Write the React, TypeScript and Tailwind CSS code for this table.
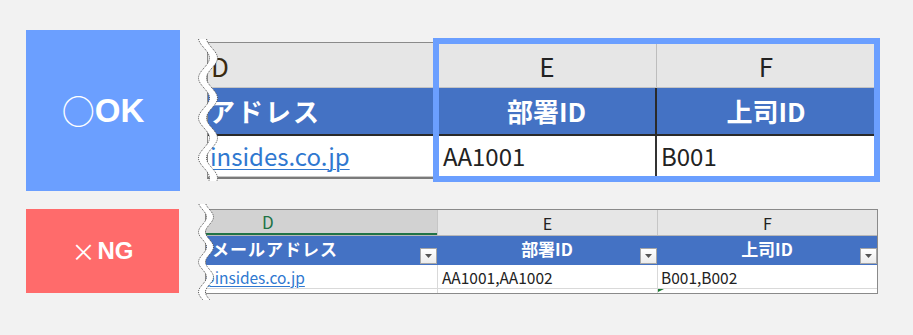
import React from 'react';

const jp = "font-['Noto_Sans_CJK_JP','Noto_Sans',sans-serif]";
const label = "font-['Liberation_Sans','Noto_Sans_CJK_JP',sans-serif]";

// sine band used to mark where a sheet is cut off
const wave = (c: number, amp: number, len: number, h: number, offset: number) => {
  const pts: [number, number][] = [];
  for (let y = 0; y <= h; y += 1) {
    pts.push([c - amp * Math.cos(((y - offset) / len) * Math.PI * 2), y]);
  }
  return pts;
};

const BreakLine = ({ c, amp, len, h, offset, half }: { c: number; amp: number; len: number; h: number; offset: number; half: number }) => {
  const pts = wave(c, amp, len, h, offset);
  const left = pts.map(([x, y]) => `${(x - half).toFixed(2)},${y}`);
  const right = pts.map(([x, y]) => `${(x + half).toFixed(2)},${y}`);
  const band = [...left, ...right.slice().reverse()].join(' ');
  return (
    <svg width={c * 2} height={h} className="block">
      <polygon points={band} fill="#ffffff" />
      <polyline points={left.join(' ')} fill="none" stroke="#555" strokeWidth="1" strokeDasharray="1 1" />
      <polyline points={right.join(' ')} fill="none" stroke="#555" strokeWidth="1" strokeDasharray="1 1" />
    </svg>
  );
};

const Dropdown = () => (
  <div className="absolute right-0 bottom-[1px] w-[17px] h-[16px] border border-[#a6a6a6] bg-gradient-to-b from-white to-[#ececec] flex items-center justify-center">
    <svg width="7" height="4" viewBox="0 0 7 4">
      <polygon points="0,0 7,0 3.5,4" fill="#555" />
    </svg>
  </div>
);

const GoodTable = () => (
  <div className="relative mt-[12px] ml-[27px] w-[669px]">
    <div className={`border border-[#8a8a8a] border-b-[2px] border-b-[#7a7a7a] ${jp}`}>
      <div className="flex h-[45px] bg-[#e6e6e6] border-b border-[#c4c4c4] text-[26px] text-[#222]">
        <div className="w-[230px] pl-[3px] leading-[45px] text-[#3a2a10]">D</div>
        <div className="w-[219px] text-center leading-[45px] border-r border-[#bdbdbd]">E</div>
        <div className="flex-1 text-center leading-[45px]">F</div>
      </div>
      <div className="flex h-[48px] bg-[#4472c4] border-b-[2px] border-[#2a2a2a] text-white font-bold text-[26px]">
        <div className="w-[230px] pl-[1px] leading-[46px] tracking-[2px]">アドレス</div>
        <div className="w-[219px] text-center leading-[46px] border-r-[2px] border-[#2a2a2a]">部署ID</div>
        <div className="flex-1 text-center leading-[46px]">上司ID</div>
      </div>
      <div className="flex h-[41px] bg-white text-[24px] text-[#222] border-b border-[#c8c8c8]">
        <div className="w-[230px] pl-[2px] leading-[40px] text-[#2f78d0] underline underline-offset-[3px] decoration-1">insides.co.jp</div>
        <div className="w-[219px] pl-[5px] leading-[40px] border-r-[2px] border-[#333]">AA1001</div>
        <div className="flex-1 pl-[4px] leading-[40px]">B001</div>
      </div>
    </div>
    <div className="absolute left-[-12px] top-[-3px]">
      <BreakLine c={13} amp={5.5} len={40} h={142} offset={-1} half={4} />
    </div>
    <div className="absolute left-[226px] top-[-4px] w-[447px] h-[144px] border-[6px] border-[#6b9fff]" />
  </div>
);

const BadTable = () => (
  <div className="relative ml-[26px] w-[673px]">
    <div className={`border border-[#8a8a8a] ${jp}`}>
      <div className="flex h-[26px] text-[16px] text-[#222] border-b border-[#b8b8b8]">
        <div className="w-[231px] bg-[#d2d2d2] border-b-[2px] border-[#217346] pl-[56px] leading-[24px] text-[#217346] text-[17px]">D</div>
        <div className="w-[220px] bg-[#e6e6e6] text-center leading-[26px] border-l border-[#c6c6c6]">E</div>
        <div className="flex-1 bg-[#e6e6e6] text-center leading-[26px] border-l border-[#c6c6c6]">F</div>
      </div>
      <div className="flex h-[29px] bg-[#4472c4] text-white font-bold text-[17px]">
        <div className="relative w-[231px] pl-[6px] leading-[26px] tracking-[1px]">
          メールアドレス
          <Dropdown />
        </div>
        <div className="relative w-[220px] text-center leading-[26px]">
          部署ID
          <Dropdown />
        </div>
        <div className="relative flex-1 text-center leading-[26px]">
          上司ID
          <Dropdown />
        </div>
      </div>
      <div className="flex h-[24px] bg-white text-[15.5px] text-[#222] border-b border-[#d9d9d9]">
        <div className="w-[231px] overflow-hidden leading-[24px]">
          <span className="block ml-[-6px] text-[#2f78d0] underline underline-offset-[2px] decoration-1">@insides.co.jp</span>
        </div>
        <div className="w-[220px] pl-[4px] leading-[24px] border-l border-[#d9d9d9]">AA1001,AA1002</div>
        <div className="flex-1 pl-[3px] leading-[24px] border-l border-[#d9d9d9]">B001,B002</div>
      </div>
      <div className="flex h-[4px] bg-white">
        <div className="w-[231px]" />
        <div className="relative w-[220px] border-l border-[#d9d9d9]" />
        <div className="relative flex-1 border-l border-[#d9d9d9]">
          <svg width="6" height="3" className="absolute left-0 top-0">
            <polygon points="0,0 6,0 0,3" fill="#1e7b34" />
          </svg>
        </div>
      </div>
    </div>
    <div className="absolute left-[-10px] top-[-5px]">
      <BreakLine c={11} amp={4} len={30} h={96} offset={-2} half={3.5} />
    </div>
  </div>
);

export default function App() {
  return (
    <div className="w-[913px] h-[335px] bg-[#f2f2f2] overflow-hidden">
      <div className="flex items-start pt-[30px] pl-[26px]">
        <div className={`w-[154px] h-[161px] bg-[#6b9fff] flex items-center justify-center text-white font-bold text-[33px] ${label}`}>
          <span className={`font-normal ${jp}`}>○</span>
          <span>OK</span>
        </div>
        <GoodTable />
      </div>
      <div className="flex items-start mt-[18px] pl-[26px]">
        <div className={`w-[153px] h-[84px] bg-[#ff6b6b] flex items-center justify-center text-white font-bold text-[24px] ${label}`}>
          <span className={`font-normal mr-[2px] ${jp}`}>×</span>
          <span>NG</span>
        </div>
        <BadTable />
      </div>
    </div>
  );
}
